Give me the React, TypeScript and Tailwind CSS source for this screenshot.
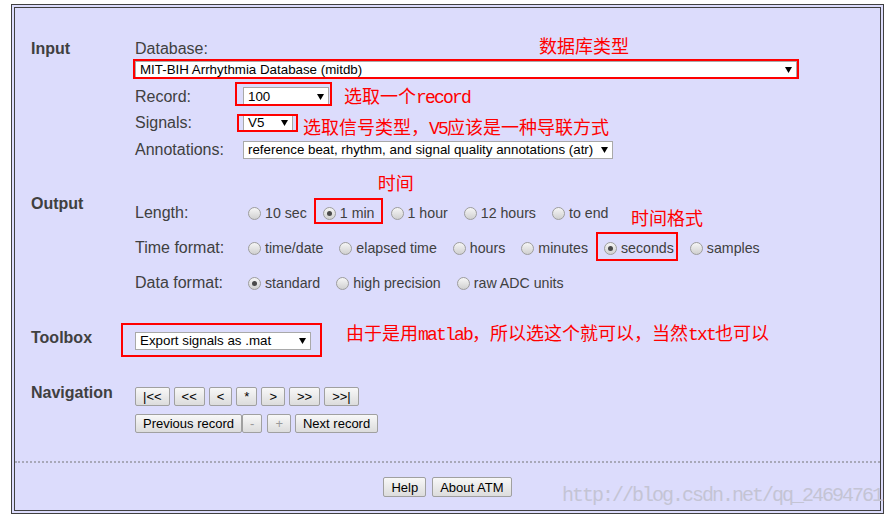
import type { ReactNode } from 'react';

const labelCls = "text-[16px] leading-[18px] text-[#404040]";
const sectionCls = "w-[104px] shrink-0 font-bold text-[16px] leading-[18px] text-[#404040]";

function Mark({ className }: { className: string }) {
  return <span className={`absolute border-2 border-[#ff0000] pointer-events-none ${className}`} />;
}

function Note({ children, className = '' }: { children: ReactNode; className?: string }) {
  return (
    <span
      className={`whitespace-nowrap text-[18px] leading-[18px] text-[#ff0000] font-['Noto_Sans_CJK_SC',sans-serif] ${className}`}
    >
      {children}
    </span>
  );
}

function Lat({ children }: { children: ReactNode }) {
  return <span className="font-['Liberation_Mono',monospace] tracking-[-1.8px]">{children}</span>;
}

function Select({ text, className, children }: { text: string; className: string; children?: ReactNode }) {
  return (
    <div
      className={`relative shrink-0 flex items-center justify-between bg-white border border-[#a9a9a9] pl-[4px] pr-[4px] text-[13.33px] text-black ${className}`}
    >
      <span className="whitespace-nowrap">{text}</span>
      <svg width="7" height="6" viewBox="0 0 7 6" className="shrink-0 ml-[5px]">
        <path d="M0 0H7L3.5 6Z" fill="#000" />
      </svg>
      {children}
    </div>
  );
}

function Radio({ label, checked = false, children }: { label: string; checked?: boolean; children?: ReactNode }) {
  return (
    <span className="relative flex items-center h-[18px]">
      <span className="w-[13px] h-[13px] rounded-full border border-[#9d9d9d] bg-linear-to-b from-[#f6f6f6] to-[#d0d0d0] flex items-center justify-center">
        {checked && <span className="w-[5px] h-[5px] rounded-full bg-[#4a4a4a]" />}
      </span>
      <span className="ml-[4px] text-[14.2px] leading-[18px] text-[#404040] whitespace-nowrap">{label}</span>
      {children}
    </span>
  );
}

function Btn({ children, disabled = false, h = 'h-[19px]' }: { children: ReactNode; disabled?: boolean; h?: string }) {
  return (
    <button
      className={`${h} px-[7px] border border-[#a0a0a0] rounded-[2px] bg-linear-to-b from-[#f8f8f8] to-[#dcdcdc] text-[13px] leading-none whitespace-nowrap ${
        disabled ? 'text-[#9a9a9a]' : 'text-black'
      }`}
    >
      {children}
    </button>
  );
}

export default function App() {
  return (
    <div className="relative w-[892px] h-[520px] bg-white pt-[4px] font-['Liberation_Sans',Arial,sans-serif] overflow-hidden">
      <div className="ml-[11px] w-[873px] h-[510px] border border-[#404040] p-[2px] bg-[#dcdcfc]">
        <div className="h-full border border-[#404040] flex flex-col">
          {/* Input */}
          <div className="mt-[32px] flex pl-[16px]">
            <div className={sectionCls}>Input</div>
            <div className="flex flex-col">
              <div className={labelCls}>Database:</div>
              <Select text="MIT-BIH Arrhythmia Database (mitdb)" className="mt-[3px] w-[662px] h-[17px]">
                <Mark className="left-[-3px] right-[-3px] top-[-3px] bottom-[-2px]" />
                <Note className="absolute left-[403px] bottom-full mb-[8px]">数据库类型</Note>
              </Select>
              <div className="mt-[9px] flex items-center h-[19px]">
                <span className={`w-[108px] ${labelCls}`}>Record:</span>
                <Select text="100" className="w-[86px] h-[19px]">
                  <Mark className="left-[-9px] right-[-4px] top-[-6px] bottom-[-1px]" />
                </Select>
                <Note className="ml-[15px]">
                  选取一个<Lat>record</Lat>
                </Note>
              </div>
              <div className="mt-[8px] flex items-center h-[18px]">
                <span className={`w-[108px] ${labelCls}`}>Signals:</span>
                <Select text="V5" className="w-[50px] h-[18px]">
                  <Mark className="left-[-7px] right-[-6px] top-[-1px] bottom-[-1px]" />
                </Select>
                <Note className="ml-[10px] mt-[8px]">
                  选取信号类型，<Lat>V5</Lat>应该是一种导联方式
                </Note>
              </div>
              <div className="mt-[9px] flex items-center h-[18px]">
                <span className={`w-[108px] ${labelCls}`}>Annotations:</span>
                <Select
                  text="reference beat, rhythm, and signal quality annotations (atr)"
                  className="w-[370px] h-[18px]"
                />
              </div>
            </div>
          </div>

          {/* Output */}
          <div className="mt-[36px] flex pl-[16px]">
            <div className={sectionCls}>Output</div>
            <div className="pt-[9px] flex flex-col gap-[17px]">
              <div className="flex items-center h-[18px]">
                <span className={`w-[113px] ${labelCls}`}>Length:</span>
                <div className="flex items-center gap-[16px]">
                  <Radio label="10 sec" />
                  <Radio label="1 min" checked>
                    <Mark className="left-[-9px] right-[-8px] top-[-6px] bottom-[-2px]" />
                    <Note className="absolute left-[55px] bottom-full mb-[13px]">时间</Note>
                  </Radio>
                  <Radio label="1 hour" />
                  <Radio label="12 hours" />
                  <Radio label="to end" />
                </div>
              </div>
              <div className="flex items-center h-[18px]">
                <span className={`w-[113px] ${labelCls}`}>Time format:</span>
                <div className="flex items-center gap-[16px]">
                  <Radio label="time/date" />
                  <Radio label="elapsed time" />
                  <Radio label="hours" />
                  <Radio label="minutes" />
                  <Radio label="seconds" checked>
                    <Mark className="left-[-8px] right-[-4px] top-[-7px] bottom-[-4px]" />
                    <Note className="absolute left-[27px] bottom-full mb-[13px]">时间格式</Note>
                  </Radio>
                  <Radio label="samples" />
                </div>
              </div>
              <div className="flex items-center h-[18px]">
                <span className={`w-[113px] ${labelCls}`}>Data format:</span>
                <div className="flex items-center gap-[16px]">
                  <Radio label="standard" checked />
                  <Radio label="high precision" />
                  <Radio label="raw ADC units" />
                </div>
              </div>
            </div>
          </div>

          {/* Toolbox */}
          <div className="mt-[37px] flex pl-[16px]">
            <div className={sectionCls}>Toolbox</div>
            <div className="flex items-start">
              <Select text="Export signals as .mat" className="mt-[3px] w-[176px] h-[18px]">
                <Mark className="left-[-15px] right-[-12px] top-[-10px] bottom-[-8px]" />
              </Select>
              <Note className="ml-[35px] mt-[-6px]">
                由于是用<Lat>matlab</Lat>，所以选这个就可以，当然<Lat>txt</Lat>也可以
              </Note>
            </div>
          </div>

          {/* Navigation */}
          <div className="mt-[34px] flex pl-[16px]">
            <div className={sectionCls}>Navigation</div>
            <div className="flex flex-col">
              <div className="mt-[3px] flex gap-[4px]">
                <Btn>|&lt;&lt;</Btn>
                <Btn>&lt;&lt;</Btn>
                <Btn>&lt;</Btn>
                <Btn>*</Btn>
                <Btn>&gt;</Btn>
                <Btn>&gt;&gt;</Btn>
                <Btn>&gt;&gt;|</Btn>
              </div>
              <div className="mt-[8px] flex">
                <Btn>Previous record</Btn>
                <Btn disabled>-</Btn>
                <span className="w-[5px]" />
                <Btn disabled>+</Btn>
                <span className="w-[4px]" />
                <Btn>Next record</Btn>
              </div>
            </div>
          </div>

          <div className="mt-[28px] border-t-2 border-dotted border-[#a8a8b8]" />

          <div className="mt-[14px] flex justify-center gap-[6px]">
            <Btn h="h-[20px]">Help</Btn>
            <Btn h="h-[20px]">About ATM</Btn>
          </div>
        </div>
      </div>

      <span className="absolute left-[562px] top-[486px] text-[20px] leading-[20px] tracking-[-2px] text-[#c4c4d4] font-['Liberation_Mono',monospace] whitespace-nowrap">
        http://blog.csdn.net/qq_24694761
      </span>
    </div>
  );
}
